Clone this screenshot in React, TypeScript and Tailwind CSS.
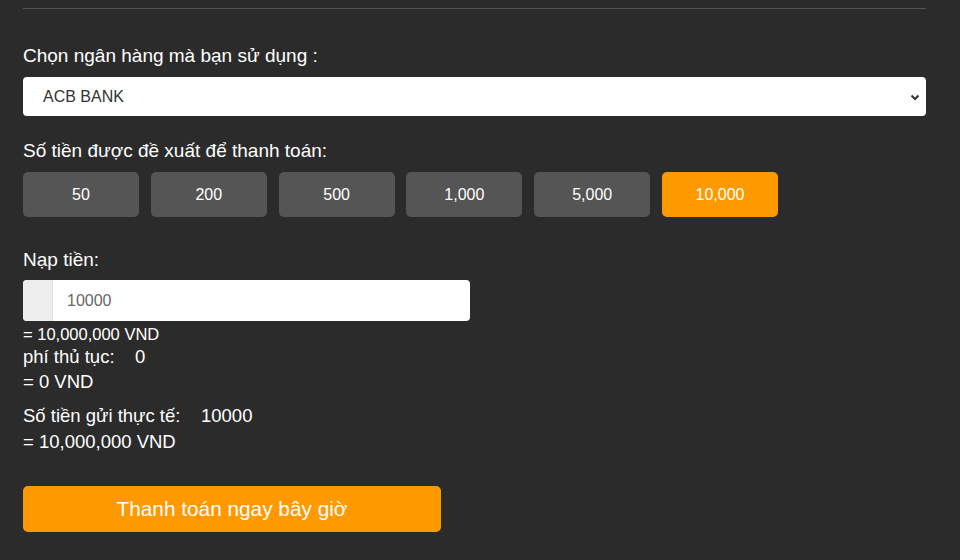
import React from "react";

export default function App() {
  const amounts = ["50", "200", "500", "1,000", "5,000", "10,000"];
  return (
    <div className="w-[960px] h-[560px] bg-[#2b2b2b] text-white overflow-hidden" style={{ fontFamily: '"Liberation Sans", Arial, sans-serif' }}>
      <div className="px-[23px] pt-[8px] w-[949px]">
        <div className="h-px bg-[#555555]" />
        <div className="mt-[35px] text-[19px] leading-[24px]">Chọn ngân hàng mà bạn sử dụng :</div>
        <div className="mt-[9px] h-[39px] bg-white rounded-[4px] flex items-center justify-between pl-[20px] pr-[6px]">
          <span className="text-[16px] text-[#333]">ACB BANK</span>
          <svg width="10" height="8" viewBox="0 0 10 8"><path d="M1.5 2.5 L5 6 L8.5 2.5" stroke="#333" strokeWidth="2" fill="none" /></svg>
        </div>
        <div className="mt-[23px] text-[19px] leading-[24px]">Số tiền được đề xuất để thanh toán:</div>
        <div className="mt-[9px] flex gap-[11.8px]">
          {amounts.map((a, i) => (
            <div
              key={a}
              className={
                i === 5
                  ? "w-[116px] h-[45px] rounded-[5px] bg-[#ff9900] flex items-center justify-center text-[16px]"
                  : "w-[116px] h-[45px] rounded-[5px] bg-[#555555] flex items-center justify-center text-[16px]"
              }
            >
              {a}
            </div>
          ))}
        </div>
        <div className="mt-[31px] text-[19px] leading-[24px]">Nạp tiền:</div>
        <div className="mt-[8px] w-[447px] h-[41px] bg-white rounded-[4px] flex overflow-hidden">
          <div className="w-[30px] bg-[#eeeeee] border-r border-[#dddddd]" />
          <div className="flex items-center pl-[14px] text-[16px] text-[#666]">10000</div>
        </div>
        <div className="mt-[3px] text-[16.5px] leading-[20px]">= 10,000,000 VND</div>
        <div className="text-[18.5px] leading-[24px] mt-[1px]">phí thủ tục:&nbsp;&nbsp;&nbsp; 0</div>
        <div className="text-[18.5px] leading-[24px] mt-[1px]">= 0 VND</div>
        <div className="text-[18.5px] leading-[26px] mt-[9px]">Số tiền gửi thực tế:&nbsp;&nbsp;&nbsp; 10000</div>
        <div className="text-[18.5px] leading-[26px]">= 10,000,000 VND</div>
        <div className="mt-[31px] w-[418px] h-[46px] rounded-[5px] bg-[#ff9900] flex items-center justify-center text-[20.8px]">
          Thanh toán ngay bây giờ
        </div>
      </div>
    </div>
  );
}
